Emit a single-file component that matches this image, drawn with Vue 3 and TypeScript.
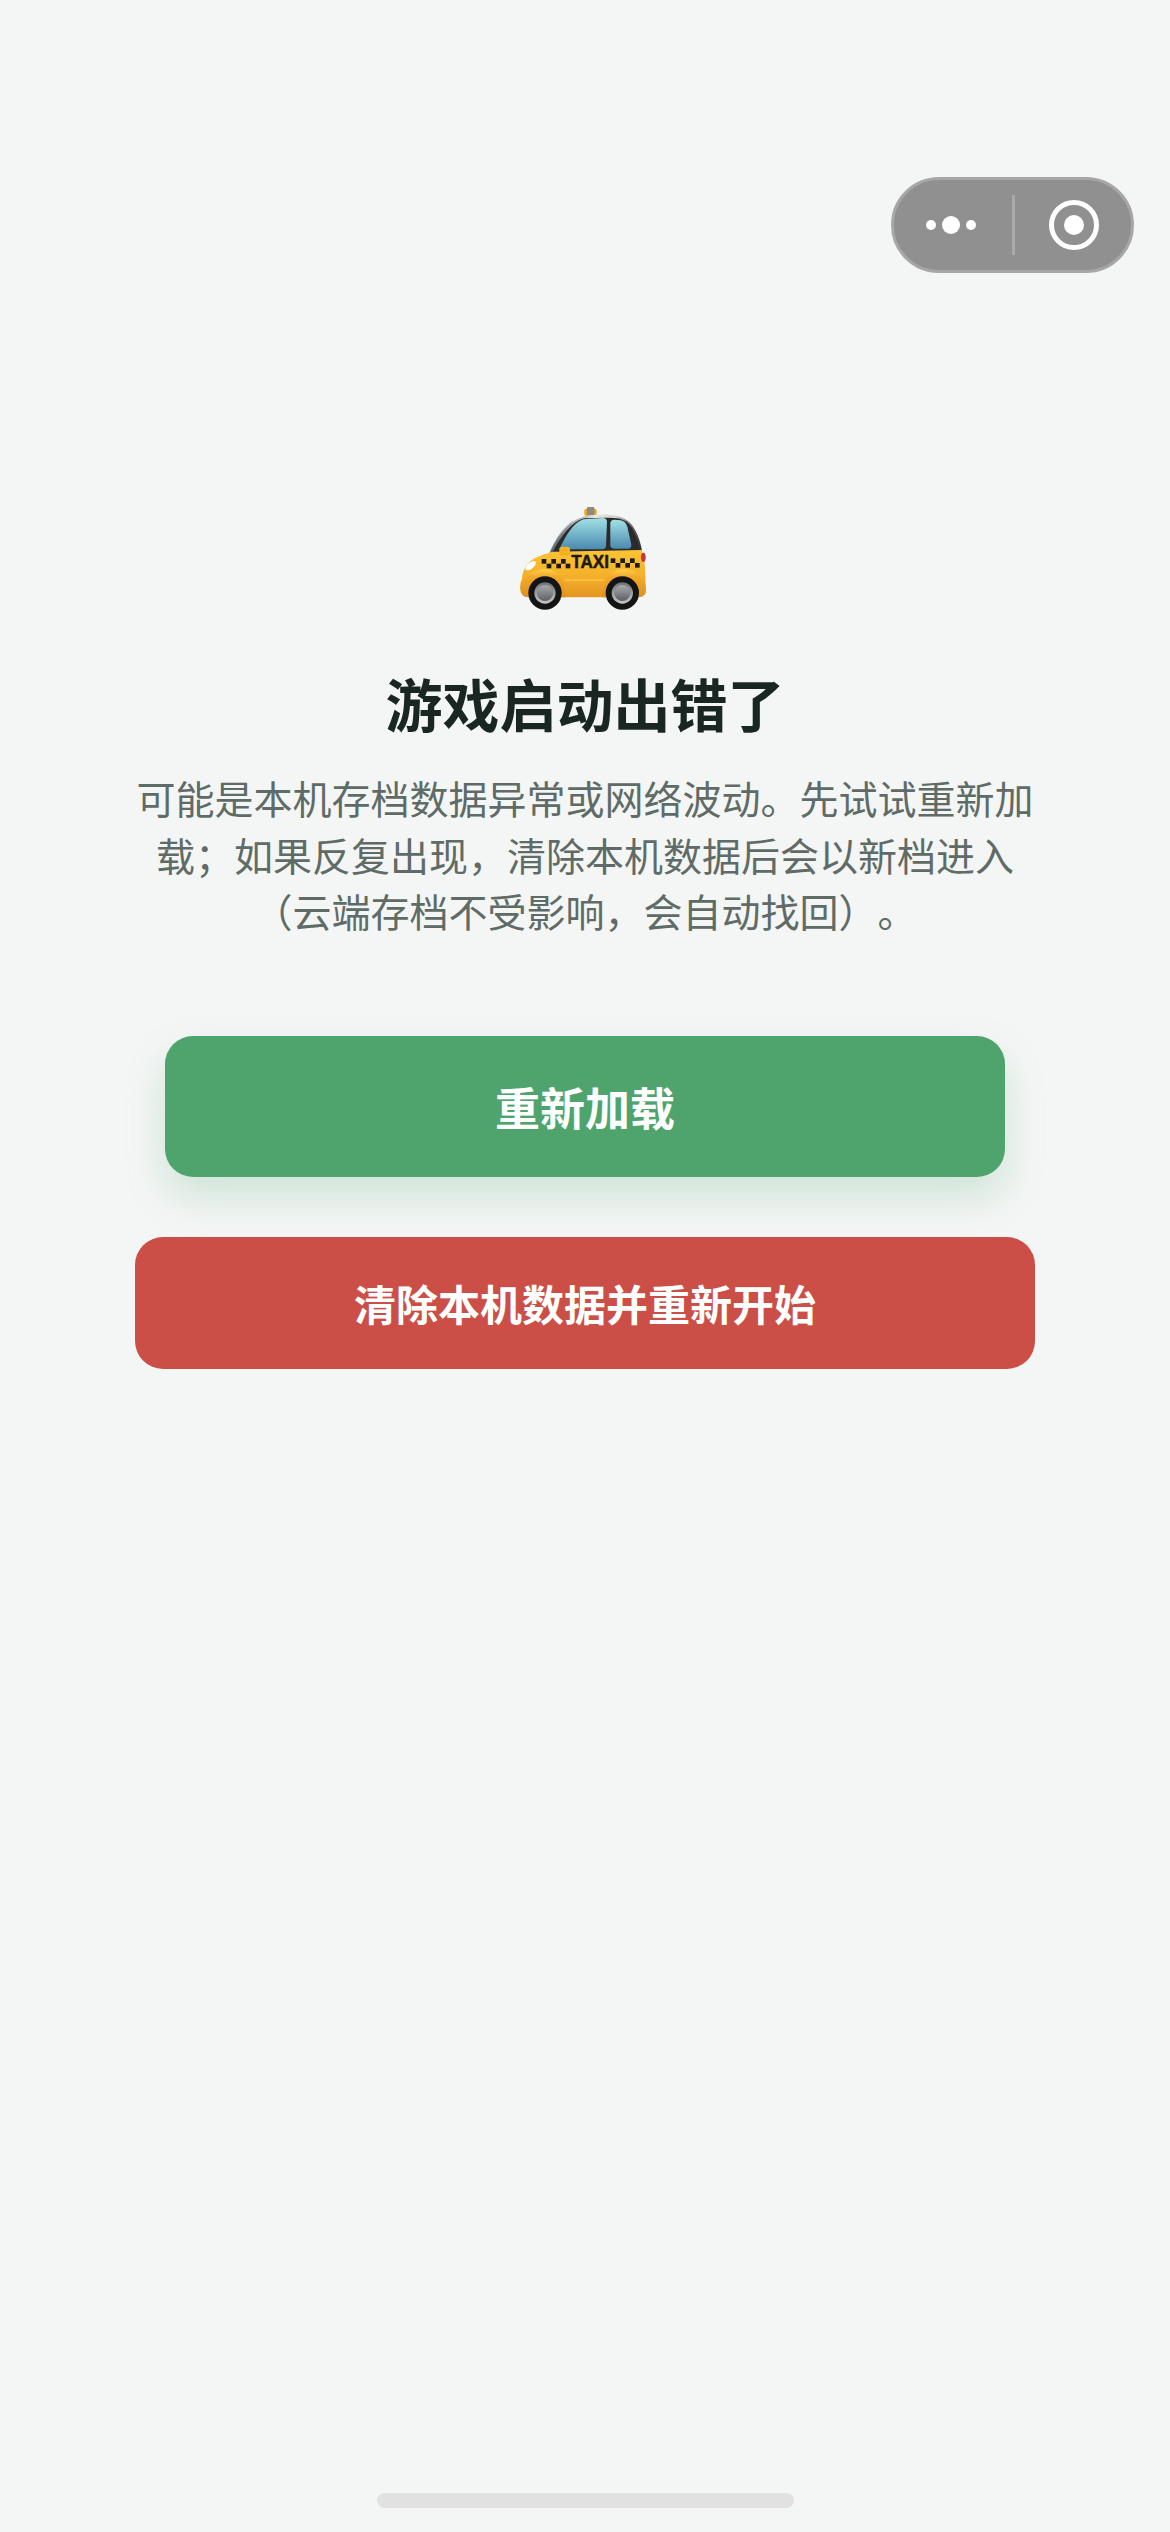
<script setup lang="ts">
const leftChecks = [
  [155, 237], [184, 237], [213, 237],
  [170, 251], [199, 251], [227, 251],
]
const rightChecks = [
  [362, 235], [391, 235], [420, 235],
  [377, 249], [406, 249], [435, 249],
]
const wheels = [165, 397]
</script>

<template>
  <div class="page">
    <div class="capsule">
      <svg class="capsule-more" width="60" height="24" viewBox="0 0 60 24">
        <circle cx="10" cy="12" r="5" fill="#fff" />
        <circle cx="30" cy="12" r="9" fill="#fff" />
        <circle cx="50" cy="12" r="5" fill="#fff" />
      </svg>
      <span class="capsule-line"></span>
      <svg class="capsule-close" width="52" height="52" viewBox="0 0 52 52">
        <circle cx="26" cy="26" r="22.5" fill="none" stroke="#fff" stroke-width="5" />
        <circle cx="26" cy="26" r="10" fill="#fff" />
      </svg>
    </div>

    <svg class="taxi" width="190" height="140" viewBox="0 0 570 420">
      <defs>
        <linearGradient id="glass" x1="0" y1="0" x2="0" y2="1">
          <stop offset="0" stop-color="#a2e0e6" />
          <stop offset="1" stop-color="#4a8aae" />
        </linearGradient>
        <linearGradient id="paint" x1="0" y1="0" x2="0" y2="1">
          <stop offset="0" stop-color="#fbc434" />
          <stop offset="0.6" stop-color="#f4ae2a" />
          <stop offset="1" stop-color="#e39522" />
        </linearGradient>
        <linearGradient id="arch" x1="0" y1="0" x2="0" y2="1">
          <stop offset="0" stop-color="#fdd04a" />
          <stop offset="0.25" stop-color="#f3aa2a" />
          <stop offset="1" stop-color="#df9020" />
        </linearGradient>
        <linearGradient id="roof" x1="0" y1="0" x2="1" y2="0">
          <stop offset="0" stop-color="#5e5e5b" />
          <stop offset="0.5" stop-color="#e6e6e3" />
          <stop offset="0.72" stop-color="#d0d0ce" />
          <stop offset="1" stop-color="#2b2b2d" />
        </linearGradient>
        <linearGradient id="hub" x1="0" y1="0" x2="0" y2="1">
          <stop offset="0" stop-color="#6f7174" />
          <stop offset="1" stop-color="#c6c7c9" />
        </linearGradient>
        <linearGradient id="hub-in" x1="0" y1="0" x2="0" y2="1">
          <stop offset="0" stop-color="#a8aaac" />
          <stop offset="1" stop-color="#5e5f62" />
        </linearGradient>
      </defs>

      <rect x="283" y="86" width="37" height="22" rx="6" fill="#eaa726" />
      <rect x="291" y="81" width="22" height="24" rx="3" fill="#8d8a80" />
      <path d="M179 218C204 162 240 116 298 106C345 100 396 103 420 128C440 150 450 180 456 212Z" fill="url(#roof)" />
      <path d="M179 218C204 162 226 138 250 122" fill="none" stroke="#6fb6cf" stroke-width="2" />
      <path d="M188 216C212 168 245 126 282 115L350 113C392 112 412 120 427 145C438 165 446 190 452 216Z" fill="#2b2b2d" />
      <path d="M208 208C225 170 250 128 280 118L338 114Q351 114 351 126L348 198Q347 208 337 208Z" fill="url(#glass)" />
      <path d="M361 130Q362 118 374 119L392 121Q406 124 412 140L424 194Q425 206 413 206L372 206Q361 206 361 196Z" fill="url(#glass)" />

      <path d="M96 298C96 275 110 245 140 232C155 224 170 220 190 215L455 210C463 228 466 265 466 300L468 330Q467 352 445 352L116 352Q92 352 91 325Q90 305 96 298Z" fill="url(#paint)" />
      <path d="M91 325C92 295 125 268 166 268C204 268 226 298 228 352L116 352Q92 352 91 325Z" fill="url(#arch)" />
      <path d="M338 352C340 300 362 268 400 268C438 268 466 295 468 330Q467 352 445 352Z" fill="url(#arch)" />
      <rect x="224" y="299" width="118" height="3" fill="#fbd35a" />

      <ellipse cx="122" cy="257" rx="19" ry="9" transform="rotate(-40 122 257)" fill="#fff" />
      <ellipse cx="460" cy="232" rx="7" ry="14" fill="#c9353a" />
      <rect x="208" y="200" width="32" height="27" rx="8" fill="#f4b01f" />

      <rect v-for="c in leftChecks" :key="'l' + c[0]" :x="c[0]" :y="c[1]" width="14" height="14" fill="#1d1a14" />
      <rect v-for="c in rightChecks" :key="'r' + c[0]" :x="c[0]" :y="c[1]" width="14" height="14" fill="#1d1a14" />
      <text class="taxi-word" x="244" y="265" textLength="113" lengthAdjust="spacingAndGlyphs">TAXI</text>

      <g v-for="cx in wheels" :key="cx">
        <circle :cx="cx" cy="339" r="50" fill="#141414" />
        <circle :cx="cx" cy="339" r="32" fill="url(#hub)" />
        <circle :cx="cx" cy="339" r="24" fill="url(#hub-in)" />
      </g>
    </svg>

    <h1 class="title">游戏启动出错了</h1>
    <p class="desc">可能是本机存档数据异常或网络波动。先试试重新加载；如果反复出现，清除本机数据后会以新档进入（云端存档不受影响，会自动找回）。</p>

    <button class="btn btn-reload">重新加载</button>
    <button class="btn btn-clear">清除本机数据并重新开始</button>

    <div class="home-bar"></div>
  </div>
</template>

<style>
html,
body {
  margin: 0;
  background: #f4f6f5;
}
</style>

<style scoped>
.page {
  position: relative;
  box-sizing: border-box;
  height: 2532px;
  padding-top: 480px;
  display: flex;
  flex-direction: column;
  align-items: center;
  background: #f4f6f5;
  font-family: "Noto Sans CJK SC", "Noto Sans", sans-serif;
  overflow: hidden;
}
.capsule {
  position: absolute;
  top: 177px;
  left: 891px;
  box-sizing: border-box;
  width: 243px;
  height: 96px;
  display: flex;
  align-items: center;
  border: 3px solid #a6a7a6;
  border-radius: 48px;
  background: #8f908f;
}
.capsule-more {
  margin-left: 27px;
}
.capsule-line {
  width: 3px;
  height: 60px;
  margin-left: 31px;
  background: #a9aaa9;
}
.capsule-close {
  margin-left: 33px;
}
.taxi {
  display: block;
  flex: none;
}
.taxi-word {
  font-family: "Liberation Sans", sans-serif;
  font-size: 53px;
  font-weight: 700;
  fill: #1d1a14;
  stroke: #1d1a14;
  stroke-width: 1.5px;
}
.title {
  margin: 46px 0 31px;
  font-size: 57px;
  line-height: 72px;
  font-weight: 700;
  color: #1a2622;
}
.desc {
  width: 900px;
  margin: 0;
  font-size: 39px;
  line-height: 56.5px;
  text-align: center;
  color: #5f6b66;
  text-spacing-trim: space-all;
}
.btn {
  display: block;
  flex: none;
  padding: 0;
  border: none;
  color: #fff;
  font-family: inherit;
  font-weight: 700;
}
.btn-reload {
  width: 840px;
  height: 141px;
  margin-top: 97px;
  border-radius: 28px;
  font-size: 45px;
  background: #4fa46d;
  box-shadow: 0 20px 40px rgba(79, 164, 109, 0.22);
}
.btn-clear {
  width: 900px;
  height: 132px;
  margin-top: 60px;
  border-radius: 28px;
  font-size: 42px;
  background: #cb4f47;
}
.home-bar {
  position: absolute;
  left: 377px;
  bottom: 24px;
  width: 417px;
  height: 15px;
  border-radius: 8px;
  background: #e0e1e0;
}
</style>
